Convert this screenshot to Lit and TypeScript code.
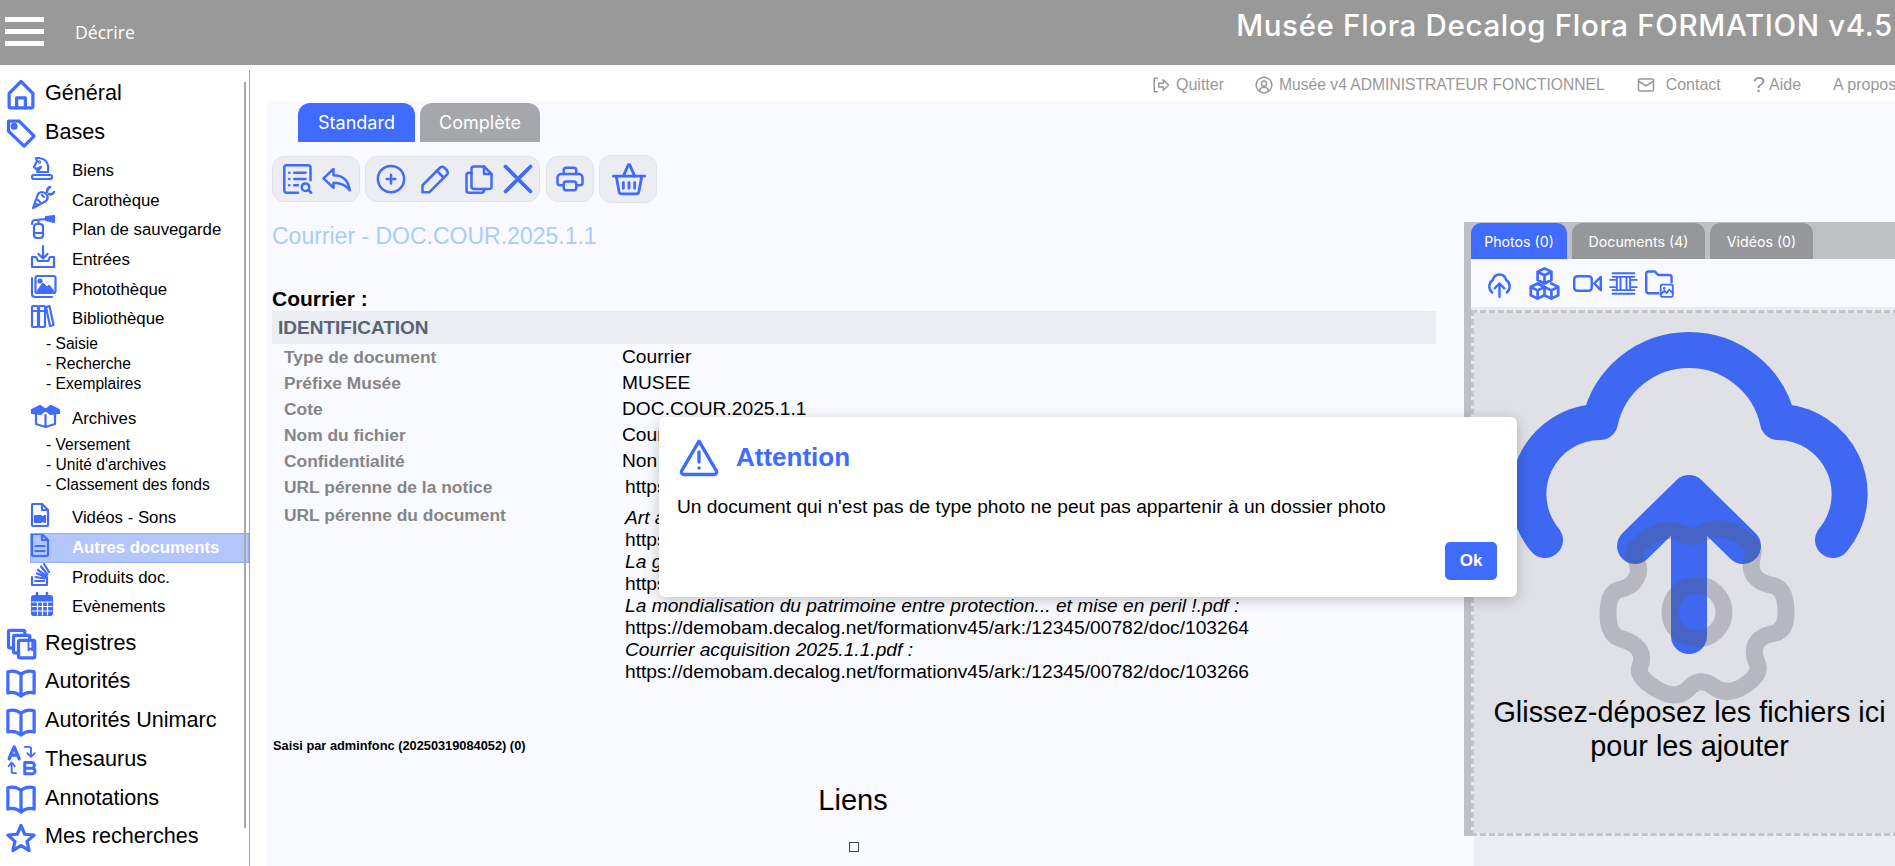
import { LitElement, html, css, svg } from "lit";
import { customElement } from "lit/decorators.js";

const ic = (body: unknown, box = "0 0 24 24") => html`<svg viewBox=${box} fill="none" stroke="currentColor" stroke-width="2" stroke-linecap="round" stroke-linejoin="round">${body}</svg>`;

const I: Record<string, unknown> = {
  home: ic(svg`<path d="M2.500 11.500 12 2l9.500 9.500V22a1 1 0 0 1-1 1h-17a1 1 0 0 1-1-1z"/><path d="M8.500 23v-8h7v8"/>`),
  tag: ic(svg`<path d="M2 2.500h8.500l12 12-8 8-12.500-12z"/><circle cx="6.500" cy="6.500" r="1.500"/>`),
  knight: ic(svg`<path d="M6 16h11c1-6 0-13-9-14L5 2l1 3-3 6 2 2 5-2c0 2-4 3-4 5z"/><circle cx="8.500" cy="6" r=".6"/><path d="M3 19h16a2 2 0 0 1 0 4H3a2 2 0 0 1 0-4z"/>`),
  carrot: ic(svg`<path d="M2 22 7 8c3-3 7-2 9 1 1 2 1 4-1 6z"/><path d="m7 14 2 2M5 18l2 1M11 9l2 2"/><path d="M16 6c0-2 1-4 3-5M18 8c2 1 4 0 5-2" stroke-width="2.600"/>`),
  ext: ic(svg`<rect x="3" y="9" width="9" height="14" rx="3"/><path d="M3 18h9M7.500 9V5M4 5l11-1M1 9c0-3 2-4 3-4"/><path d="m15 2 8-1v6l-8-2z" fill="currentColor"/>`),
  inbox: ic(svg`<path d="M12 1v12M7.500 9l4.500 4.500L16.500 9"/><path d="M5 12H1v10h22V12h-4l-2 4H7z"/>`),
  image: ic(svg`<path d="M1 3v16a3 3 0 0 0 3 3h17"/><rect x="4.500" y="1" width="20" height="17" rx="2"/><circle cx="9" cy="6" r="1.500" fill="currentColor"/><path d="m7 16 5-7 4 4 2-2 4 5z" fill="currentColor"/>`),
  books: ic(svg`<rect x="1" y="2" width="6" height="21" rx="1"/><rect x="8" y="2" width="6" height="21" rx="1"/><path d="m15 3 4 19 3.500-1M15 3l3.500-1 4 19M1 7h6M8 7h6"/>`),
  box: ic(svg`<path d="M5 9v11l9.500 3 9.500-3V9M14.500 11v12"/><path d="M1 6l8-4 5.500 4-5 4-8.500-1zM28 6l-8-4-5.500 4 5 4 8.500-1z" fill="currentColor"/>`),
  fvid: ic(svg`<path d="M2 1h9l6 6v15a1 1 0 0 1-1 1H2a1 1 0 0 1-1-1V2a1 1 0 0 1 1-1z"/><path d="M11 1v6h6"/><path d="M4 13h6v6H4zM10 15l4-2v6l-4-2z" fill="currentColor"/>`),
  fdoc: ic(svg`<path d="M2 1h9l6 6v15a1 1 0 0 1-1 1H2a1 1 0 0 1-1-1V2a1 1 0 0 1 1-1z"/><path d="M11 1v6h6M4.500 13h9M4.500 18h9"/>`),
  stack: ic(svg`<path d="M1 14v8h15v-8M4 18h9M4.500 14l9 1.500M6 10.500l8.500 3.500M7 7l8 6M10 3.500l6.500 8M13 1l5 8"/>`),
  cal: ic(svg`<rect x="1" y="4" width="20" height="19" rx="2" fill="currentColor"/><path d="M6 1v4M16 1v4" stroke-width="2.500"/><path d="M1 10h20M1 14.500h20M1 19h20M6.500 10v13M11.500 10v13M16.500 10v13" stroke="#fff" stroke-width="1.200"/>`),
  copies: ic(svg`<path d="M6 15H3a1 1 0 0 1-1-1V2a1 1 0 0 1 1-1h11a1 1 0 0 1 1 1v3"/><path d="M9 19H7a1 1 0 0 1-1-1V6a1 1 0 0 1 1-1h11a1 1 0 0 1 1 1v3"/><rect x="10" y="9" width="13" height="14" rx="1"/><path d="M18 9v8l1.500-1.500L21 17V9" stroke-width="1.500"/>`),
  book: ic(svg`<path d="M12 5C9 2.500 5 2 1.500 3v17C5 19 9 20 12 22.500c3-2.500 7-3.500 10.500-2.500V3C19 2 15 2.500 12 5zM12 5v17.500"/>`),
  ab: ic(svg`<path d="M2.500 11 6.500 1.500 10.500 11M3.500 8h6" stroke-width="2.600"/><path d="M15 14h5.500a2 2 0 0 1 0 4.500H15zM15 18.500h6a2 2 0 0 1 0 4.500h-6z" stroke-width="2.400"/><path d="M15 1.500h3.500a1.500 1.500 0 0 1 1.500 1.500v6M17 6.500 20 9.500l3-3M8 22.500H6a1.500 1.500 0 0 1-1.500-1.500v-6M2 17l2.500-3L7 17" stroke-width="1.500"/>`),
  star: ic(svg`<path d="m12 2 3 7 7.500.7-5.700 5 1.700 7.300-6.500-3.900-6.500 3.900 1.700-7.300-5.700-5L9 9z"/>`),
  arc: ic(svg`<path d="M2 24c1-3 4-4 7-3"/>`),
  listsearch: ic(svg`<path d="M12 23H3a2 2 0 0 1-2-2V3a2 2 0 0 1 2-2h17a2 2 0 0 1 2 2v10"/><path d="M9 7h9M9 12h9M9 17h3M5 7h.1M5 12h.1M5 17h.1"/><circle cx="18" cy="18.500" r="3"/><path d="m20.500 21 2 2"/>`),
  reply: ic(svg`<path d="M10 19 2 11.500 10 4v5c7 0 12 4 13 12-3-4-7-6-13-6z"/>`),
  plus: ic(svg`<circle cx="12" cy="12" r="10.500"/><path d="M12 8.500v7M8.500 12h7"/>`),
  pencil: ic(svg`<path d="M2 22.500V17L16 3a2.500 2.500 0 0 1 3.500 0L21.500 5a2.500 2.500 0 0 1 0 3.500L7.500 22.500z"/><path d="m13.500 5.500 5.500 5.500"/>`),
  copy: ic(svg`<path d="M8 2h8l6 6v10a2 2 0 0 1-2 2H8a2 2 0 0 1-2-2V4a2 2 0 0 1 2-2z"/><path d="M16 2v6h6"/><path d="M6 7H4a2 2 0 0 0-2 2v12a2 2 0 0 0 2 2h10a2 2 0 0 0 2-2v-1"/>`),
  x: ic(svg`<path d="M2 2l20 20M22 2 2 22" stroke-width="3"/>`),
  printer: ic(svg`<path d="M6 17H4a2 2 0 0 1-2-2v-4a3 3 0 0 1 3-3h14a3 3 0 0 1 3 3v4a2 2 0 0 1-2 2h-2"/><path d="M17 8V5a2 2 0 0 0-2-2H9a2 2 0 0 0-2 2v3"/><rect x="7" y="14" width="10" height="7" rx="2"/>`),
  basket: ic(svg`<path d="M1 10h22M3 10l2 11a2 2 0 0 0 2 1.500h10a2 2 0 0 0 2-1.500l2-11M8 10l3.500-8M16 10l-3.500-8M8 14.500v4M12 14.500v4M16 14.500v4"/>`),
  cloud: ic(svg`<path d="M6 19.500A6.500 6.500 0 0 1 6.500 9C8 3 16 3 17.500 9A6.500 6.500 0 0 1 18 19.500"/><path d="M12 23V12M8 16l4-4 4 4"/>`),
  cubes: ic(svg`<path d="m12 1 5 2.500v6L12 12 7 9.500v-6zM7 3.500 12 6l5-2.500M12 6v6M7 12l5 2.500v6L7 23l-5-2.500v-6zM2 14.500 7 17l5-2.500M7 17v6M17 12l5 2.500v6L17 23l-5-2.500M12 14.500 17 17l5-2.500M17 17v6"/>`),
  video: ic(svg`<rect x="1" y="6" width="14.500" height="12" rx="2.500"/><path d="m23 6.500-5.500 5.500 5.500 5.500z"/>`),
  film: ic(svg`<path d="M3 3.500h18M3 6.500h18M3 17.500h18M3 20.500h18M6.500 6.500v11M17.500 6.500v11M9.500 6.500v11M14.500 6.500v11M1 9h4M1 15h4M19 9h4M19 15h4" stroke-width="1.600"/>`),
  folder: ic(svg`<path d="M11 20H3a2 2 0 0 1-2-2V4a2 2 0 0 1 2-2h5l3 3h9a2 2 0 0 1 2 2v4"/><rect x="13" y="13" width="10" height="10" rx="1" stroke-width="1.500"/><circle cx="16" cy="16" r=".7" stroke-width="1"/><path d="m13 21 3-3 2 2 2-3 3 3" stroke-width="1.500"/>`),
  warn: ic(svg`<path d="M12 2.500 1.500 20.500a1.500 1.500 0 0 0 1.300 2h18.400a1.500 1.500 0 0 0 1.300-2z"/><path d="M12 9v6M12 18.600h.1"/>`),
  quit: ic(svg`<path d="M7 3H3v18h4"/><path d="M9 9.500h6V5l7 7-7 7v-4.500H9z"/>`),
  user: ic(svg`<circle cx="12" cy="12" r="10.500"/><circle cx="12" cy="10" r="3.500"/><path d="M6 19c1-3 3-4 6-4s5 1 6 4"/>`),
  mail: ic(svg`<rect x="2" y="4" width="20" height="16" rx="2"/><path d="m2 7 10 6 10-6"/>`),
};

/* Closed curve through the midpoints of the outline, so the gear's corners come out rounded. */
const GEAR: [number, number][] = [
  [1693, 540], [1717, 524], [1756, 544], [1749, 569], [1760, 583], [1785, 588], [1787, 631], [1760, 636],
  [1752, 652], [1762, 674], [1727, 697], [1700, 676], [1677, 701], [1636, 677], [1644, 656], [1633, 642],
  [1608, 635], [1608, 592], [1632, 587], [1641, 569], [1630, 549], [1667, 526],
];
const smooth = (p: [number, number][]) => {
  const mid = (a: [number, number], b: [number, number]) => `${(a[0] + b[0]) / 2} ${(a[1] + b[1]) / 2}`;
  let d = `M${mid(p[p.length - 1], p[0])}`;
  p.forEach((pt, i) => { d += `Q${pt[0]} ${pt[1]} ${mid(pt, p[(i + 1) % p.length])}`; });
  return d + "Z";
};

type Side = { t: string; k: "top" | "sub" | "leaf" | "cur"; i?: string; c?: string };
const SIDE: Side[] = [
  { t: "Général", k: "top", i: "home" }, { t: "Bases", k: "top", i: "tag" },
  { t: "Biens", k: "sub", i: "knight", c: "sp-biens" }, { t: "Carothèque", k: "sub", i: "carrot" },
  { t: "Plan de sauvegarde", k: "sub", i: "ext" }, { t: "Entrées", k: "sub", i: "inbox" },
  { t: "Photothèque", k: "sub", i: "image" }, { t: "Bibliothèque", k: "sub", i: "books" },
  { t: "- Saisie", k: "leaf" }, { t: "- Recherche", k: "leaf" }, { t: "- Exemplaires", k: "leaf" },
  { t: "Archives", k: "sub", i: "box", c: "sp-arch" },
  { t: "- Versement", k: "leaf", c: "sp-vers" }, { t: "- Unité d'archives", k: "leaf" }, { t: "- Classement des fonds", k: "leaf" },
  { t: "Vidéos - Sons", k: "sub", i: "fvid", c: "sp-vid" }, { t: "Autres documents", k: "cur", i: "fdoc" },
  { t: "Produits doc.", k: "sub", i: "stack" }, { t: "Evènements", k: "sub", i: "cal" },
  { t: "Registres", k: "top", i: "copies", c: "sp-reg" }, { t: "Autorités", k: "top", i: "book" },
  { t: "Autorités Unimarc", k: "top", i: "book" }, { t: "Thesaurus", k: "top", i: "ab" },
  { t: "Annotations", k: "top", i: "book" }, { t: "Mes recherches", k: "top", i: "star" },
  { t: "", k: "top", i: "arc" },
];

const ROWS: [string, string][] = [
  ["Type de document", "Courrier"], ["Préfixe Musée", "MUSEE"], ["Cote", "DOC.COUR.2025.1.1"],
  ["Nom du fichier", "Courrier"], ["Confidentialité", "Non"],
];
const BASE = "https://demobam.decalog.net/formationv45/ark:/12345/00782/doc/";

@customElement("app-root")
export class AppRoot extends LitElement {
  static styles = css`
    :host { display: block; width: 1895px; height: 866px; overflow: hidden; font-family: "Liberation Sans", Arial, sans-serif; color: #000; background: #fff; }
    svg { display: block; }
    .hdr { height: 65px; background: #999; color: #fff; display: flex; align-items: center; }
    .burger { width: 39px; margin: 0 0 2px 5px; display: flex; flex-direction: column; gap: 7px; }
    .burger i { display: block; height: 5px; background: #fff; }
    .sect { margin: 0 0 2px 31px; font: 17.6px "Open Sans", sans-serif; }
    .brand { margin: 0 2px 14px auto; font: 500 29.5px/1 Inter, sans-serif; letter-spacing: .65px; white-space: nowrap; }
    .body { display: flex; height: 801px; }
    .side { position: relative; box-sizing: border-box; width: 250px; margin-top: 5px; padding-top: 3.500px; border-right: 1px solid #a3a3a3; flex: none; overflow: hidden; }
    .thumb { position: absolute; left: 244px; top: 12px; width: 2px; height: 746px; background: #a8a8a8; }
    .row { display: flex; align-items: center; white-space: nowrap; color: #000; }
    .row svg { color: #406bff; flex: none; overflow: visible; }
    .top { height: 38.7px; font-size: 21.6px; padding-left: 6px; }
    .top svg { width: 30px; height: 30px; margin: 3px 9px 0 0; stroke-width: 2.600; }
    .sub, .cur { height: 29.6px; font-size: 16.8px; padding-left: 31px; }
    .sub svg, .cur svg { width: 24px; height: 24px; margin: -6px 17px 0 0; stroke-width: 2.200; }
    .leaf { height: 20px; font-size: 15.6px; padding-left: 46px; }
    .cur { background: #b3c6fb; outline: 1px solid #8fabf9; outline-offset: -1px; color: #fff; font-weight: bold; margin-left: 30px; padding-left: 1px; }
    .sp-biens { margin-top: 5.500px; }
    .sp-arch { margin-top: 10px; }
    .sp-vers { margin-top: 1px; }
    .sp-vid { margin-top: 9px; }
    .sp-reg { margin-top: 1.500px; }
    .main { flex: 1; min-width: 0; display: flex; flex-direction: column; }
    .links { height: 36px; box-sizing: border-box; padding: 4px 0 0 902px; flex: none; display: flex; align-items: center; color: #999; font-size: 16px; white-space: nowrap; overflow: hidden; }
    .links svg { width: 18px; height: 18px; margin-right: 6px; }
    .lk1, .lk3, .lk4 { margin-right: 32px; display: flex; align-items: center; }
    .lk2 { font-size: 15.65px; margin: 0 32px 0 -1px; display: flex; align-items: center; }
    .lk3 svg { margin-right: 11px; }
    .q { font-size: 22px; margin-right: 4px; }
    .panel { flex: 1; margin-left: 16px; background: #f9faff; display: flex; min-height: 0; position: relative; }
    .left { width: 1198px; flex: none; }
    .tabs { display: flex; gap: 5px; margin: 2px 0 0 32px; }
    .tab { height: 39px; border-radius: 12px 12px 0 0; display: flex; align-items: center; justify-content: center; color: #fff; font-size: 18px; font-family: Inter, sans-serif; background: #a6a7ab; }
    .tab.s { width: 117px; background: #406bff; }
    .tab.c { width: 120px; }
    .tools { display: flex; align-items: center; gap: 5px; margin: 13px 0 0 6px; height: 48px; }
    .grp { box-sizing: border-box; height: 46px; background: #ecedf3; border: 1px solid #e2e3e9; border-radius: 12px; display: flex; align-items: center; color: #406bff; padding-left: 10px; gap: 8px; }
    .grp svg { width: 30px; height: 30px; }
    .g1 { width: 88px; }
    .g2 { width: 175px; gap: 14px; margin-right: 1px; }
    .g2 .tight { margin-left: -5px; }
    .g3 { width: 48px; padding-left: 8px; }
    .g4 { width: 58px; height: 48px; padding-left: 12px; }
    .g4 svg { width: 34px; height: 34px; }
    .ttl { margin: 18px 0 0 6px; font-size: 23px; line-height: 30px; color: #a9ccff; }
    .form { margin: 36px 0 0 6px; font-size: 21px; line-height: 24px; font-weight: bold; }
    .bar { width: 1164px; height: 33px; box-sizing: border-box; padding-left: 6px; display: flex; align-items: center; background: #ecedf2; color: #586374; font-weight: bold; font-size: 19px; margin-left: 6px; }
    .grid { display: grid; grid-template-columns: 338px 1fr; grid-auto-rows: 26px; margin-left: 18px; align-items: center; font-size: 19.2px; }
    .lb { color: #858585; font-weight: bold; font-size: 17.4px; }
    .url { margin-left: 3px; }
    .docs { display: grid; grid-template-columns: 338px 1fr; margin: 7px 0 0 18px; font-size: 19.2px; line-height: 22px; white-space: nowrap; }
    .docs .lb { margin-top: -3px; }
    .docs em { display: block; }
    .by { margin: 56px 0 0 7px; font-size: 12.8px; line-height: 14px; font-weight: bold; }
    .lk { width: 1162px; margin: 30px 0 0 6px; text-align: center; font-size: 29px; line-height: 34px; }
    .sq { width: 8px; height: 8px; border: 1.500px solid #444; margin: 25px 0 0 583px; }
    .right { flex: 1; min-width: 0; display: flex; flex-direction: column; padding-top: 121px; }
    .rp { height: 614px; flex: none; background: #bfc0c4; padding: 1px 0 0 7px; overflow: hidden; box-sizing: border-box; }
    .rtabs { display: flex; gap: 5px; }
    .rt { height: 36px; border-radius: 10px 10px 0 0; background: #96979b; color: #fff; font: 14.2px Inter, sans-serif; display: flex; align-items: center; justify-content: center; }
    .rt.a { background: #406bff; width: 96px; }
    .rt.b { width: 133px; }
    .rt.c { width: 103px; }
    .rtools { height: 51px; box-sizing: border-box; padding: 0 0 0 14px; background: #f8f9ff; border-bottom: 3px solid #eaebef; display: flex; align-items: center; color: #406bff; }
    .rtools svg { width: 29px; height: 29px; margin-right: 7px; }
    .rtools .cb { margin-left: 7px; }
    .rtools .cb svg { width: 33px; height: 33px; margin-right: 12px; }
    .drop { box-sizing: border-box; width: 437px; height: 526px; background: linear-gradient(#e0e1e7, #e0e1e7) padding-box, #eaebef border-box; border: 3px dashed #c4c5ca; display: flex; flex-direction: column; align-items: center; }
    .wm { width: 380px; height: 390px; flex: none; margin-top: 7px; }
    .dt { margin-top: -15px; font-size: 28.8px; line-height: 34px; text-align: center; white-space: nowrap; }
    .under { flex: 1; margin-left: 10px; background: #ecedf2; }
    .dlg { position: absolute; left: 393px; top: 316px; width: 858px; height: 180px; box-sizing: border-box; padding: 20px 20px 17px 18px; background: #fff; border-radius: 6px; box-shadow: 0 3px 14px rgba(0,0,0,.22); display: flex; flex-direction: column; }
    .dh { display: flex; align-items: center; gap: 15px; color: #406bff; }
    .dh svg { width: 44px; height: 40px; }
    .dh b { font-size: 26px; }
    .dm { margin-top: 20px; font-size: 19.2px; line-height: 20px; white-space: nowrap; }
    .ok { margin-top: auto; align-self: flex-end; width: 52px; height: 38px; border-radius: 5px; background: #406bff; color: #fff; font-weight: bold; font-size: 17px; display: flex; align-items: center; justify-content: center; }
  `;

  render() {
    return html`
      <div class="hdr">
        <div class="burger"><i></i><i></i><i></i></div>
        <div class="sect">Décrire</div>
        <div class="brand">Musée Flora Decalog Flora FORMATION v4.5</div>
      </div>
      <div class="body">
        <aside class="side">
          ${SIDE.map((s) => html`<div class="row ${s.k} ${s.c ?? ""}">${s.i ? I[s.i] : ""}<span>${s.t}</span></div>`)}
          <div class="thumb"></div>
        </aside>
        <main class="main">
          <div class="links">
            <span class="lk1">${I.quit}Quitter</span>
            <span class="lk2">${I.user}Musée v4 ADMINISTRATEUR FONCTIONNEL</span>
            <span class="lk3">${I.mail}Contact</span>
            <span class="lk4"><span class="q">?</span>Aide</span>
            <span>A propos</span>
          </div>
          <div class="panel">
            <section class="left">
              <div class="tabs"><div class="tab s">Standard</div><div class="tab c">Complète</div></div>
              <div class="tools">
                <div class="grp g1">${I.listsearch}${I.reply}</div>
                <div class="grp g2">${I.plus}${I.pencil}${I.copy}<span class="tight">${I.x}</span></div>
                <div class="grp g3">${I.printer}</div>
                <div class="grp g4">${I.basket}</div>
              </div>
              <div class="ttl">Courrier - DOC.COUR.2025.1.1</div>
              <div class="form">Courrier :</div>
              <div class="bar">IDENTIFICATION</div>
              <div class="grid">
                ${ROWS.map(([a, b]) => html`<div class="lb">${a}</div><div>${b}</div>`)}
                <div class="lb">URL pérenne de la notice</div><div class="url">https://demobam</div>
              </div>
              <div class="docs">
                <div class="lb">URL pérenne du document</div>
                <div class="url">
                  <em>Art a</em>${BASE}103262
                  <em>La g</em>${BASE}103263
                  <em>La mondialisation du patrimoine entre protection... et mise en peril !.pdf :</em>${BASE}103264
                  <em>Courrier acquisition 2025.1.1.pdf :</em>${BASE}103266
                </div>
              </div>
              <div class="by">Saisi par adminfonc (20250319084052) (0)</div>
              <div class="lk">Liens</div>
              <div class="sq"></div>
            </section>
            <section class="right">
              <div class="rp">
                <div class="rtabs"><div class="rt a">Photos (0)</div><div class="rt b">Documents (4)</div><div class="rt c">Vidéos (0)</div></div>
                <div class="rtools">${I.cloud}<span class="cb">${I.cubes}</span>${I.video}${I.film}${I.folder}</div>
                <div class="drop">
                  <svg class="wm" viewBox="1500 320 380 390" fill="none" stroke-linecap="round" stroke-linejoin="round">
                    <g stroke="#3e68f1" stroke-width="36">
                      <path d="M1545 540A72 72 0 0 1 1600 422A91 91 0 0 1 1778 422A72 72 0 0 1 1833 540"/>
                      <path d="M1689 636V493M1635 546 1689 493 1743 546"/>
                    </g>
                    <g stroke="rgba(90,90,100,.3)" stroke-width="17">
                      <path d=${smooth(GEAR)}/>
                      <circle cx="1697" cy="612" r="27"/>
                    </g>
                  </svg>
                  <div class="dt">Glissez-déposez les fichiers ici<br />pour les ajouter</div>
                </div>
              </div>
              <div class="under"></div>
            </section>
            <div class="dlg">
              <div class="dh">${I.warn}<b>Attention</b></div>
              <div class="dm">Un document qui n'est pas de type photo ne peut pas appartenir à un dossier photo</div>
              <div class="ok">Ok</div>
            </div>
          </div>
        </main>
      </div>
    `;
  }
}
